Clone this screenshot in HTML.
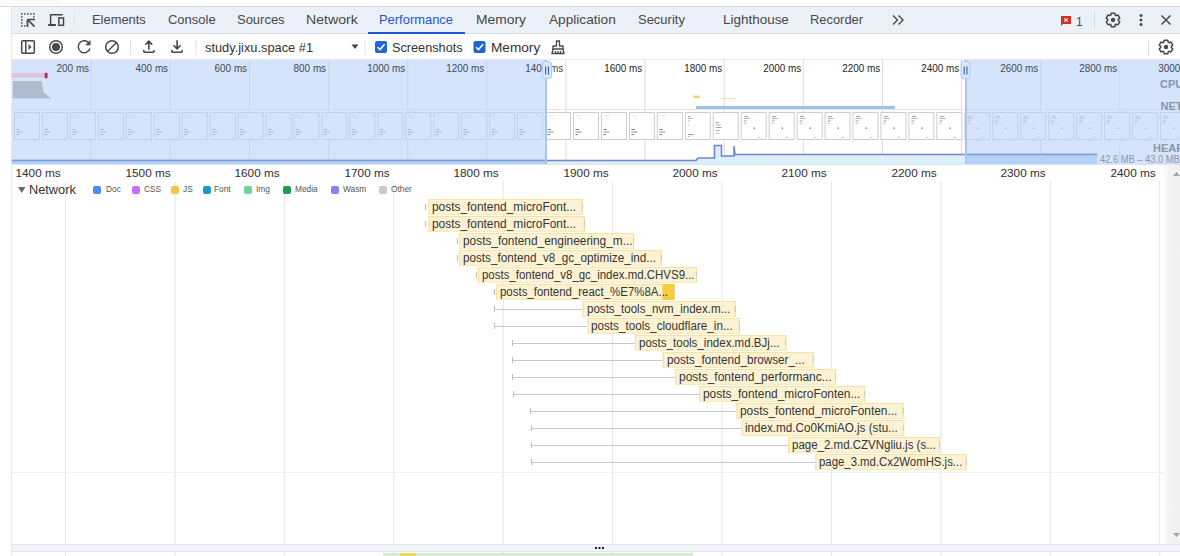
<!DOCTYPE html><html><head><meta charset="utf-8"><style>
*{box-sizing:border-box;margin:0;padding:0}
html,body{width:1180px;height:556px;overflow:hidden;background:#fff;font-family:"Liberation Sans",sans-serif;color:#1f1f1f}
body{position:relative}
.a{position:absolute}
.t{position:absolute;white-space:nowrap;line-height:1}
svg{position:absolute;left:0;top:0;overflow:visible}
.tab{position:absolute;top:14px;font-size:12.4px;color:#474747;white-space:nowrap;line-height:1}
.ol{position:absolute;top:63px;font-size:11px;color:#3c3c3c;white-space:nowrap;line-height:1;transform-origin:100% 50%}
.rl{position:absolute;top:168px;font-size:11.4px;color:#303030;white-space:nowrap;line-height:1;transform-origin:100% 50%;transform:scaleX(1.035)}
.nl{position:absolute;font-size:12px;color:#333;white-space:nowrap;line-height:1;transform-origin:0 50%}
.lg{position:absolute;top:185px;font-size:8.6px;color:#555;white-space:nowrap;line-height:1;transform:scaleX(0.97);transform-origin:0 50%}
.sw{position:absolute;top:186px;width:8px;height:8px;border-radius:2px}
</style></head><body>
<svg width="1180" height="556" viewBox="0 0 1180 556">
<rect x="0" y="6" width="1180" height="1" fill="#d6d6d8"/>
<rect x="0" y="0" width="62" height="5" fill="#fafafa"/>
<rect x="11" y="6" width="1" height="550" fill="#e8e9ef"/>
<rect x="12" y="7" width="1168" height="26" fill="#ecf1f9"/>
<rect x="12" y="33" width="1168" height="1" fill="#d5dce8"/>
<rect x="12" y="59" width="1168" height="1" fill="#e3e7ee"/>
<rect x="12" y="60" width="1168" height="104" fill="#fff"/>
<rect x="90.63" y="60" width="1" height="104" fill="#d9dbe8"/>
<rect x="169.76" y="60" width="1" height="104" fill="#d9dbe8"/>
<rect x="248.89" y="60" width="1" height="104" fill="#d9dbe8"/>
<rect x="328.02" y="60" width="1" height="104" fill="#d9dbe8"/>
<rect x="407.15" y="60" width="1" height="104" fill="#d9dbe8"/>
<rect x="486.28" y="60" width="1" height="104" fill="#d9dbe8"/>
<rect x="565.41" y="60" width="1" height="104" fill="#d9dbe8"/>
<rect x="644.54" y="60" width="1" height="104" fill="#d9dbe8"/>
<rect x="723.67" y="60" width="1" height="104" fill="#d9dbe8"/>
<rect x="802.80" y="60" width="1" height="104" fill="#d9dbe8"/>
<rect x="881.93" y="60" width="1" height="104" fill="#d9dbe8"/>
<rect x="961.06" y="60" width="1" height="104" fill="#d9dbe8"/>
<rect x="1040.19" y="60" width="1" height="104" fill="#d9dbe8"/>
<rect x="1119.32" y="60" width="1" height="104" fill="#d9dbe8"/>
<rect x="1198.45" y="60" width="1" height="104" fill="#d9dbe8"/>
<rect x="12" y="109" width="1168" height="1" fill="#e2e5ea"/>
<rect x="693.5" y="95.6" width="6" height="2.4" fill="#f1d060"/>
<rect x="720" y="98" width="16" height="1" fill="#f6e3a8"/>
<rect x="696" y="106" width="199" height="3" fill="#9fc1e9"/>
<rect x="14.50" y="112.5" width="25" height="27" fill="#fff" stroke="#cacdd3" stroke-width="1"/>
<rect x="17.00" y="115.5" width="5" height="0.7" fill="#ddd"/>
<rect x="19.00" y="118" width="4" height="0.7" fill="#e4e4e4"/>
<rect x="16.50" y="129" width="3.5" height="1.1" fill="#888"/>
<rect x="16.50" y="131.5" width="6" height="1.1" fill="#999"/>
<rect x="16.50" y="134" width="2.5" height="1.1" fill="#888"/>
<rect x="42.45" y="112.5" width="25" height="27" fill="#fff" stroke="#cacdd3" stroke-width="1"/>
<rect x="44.95" y="115.5" width="5" height="0.7" fill="#ddd"/>
<rect x="46.95" y="118" width="4" height="0.7" fill="#e4e4e4"/>
<rect x="44.45" y="129" width="3.5" height="1.1" fill="#888"/>
<rect x="44.45" y="131.5" width="6" height="1.1" fill="#999"/>
<rect x="44.45" y="134" width="2.5" height="1.1" fill="#888"/>
<rect x="70.40" y="112.5" width="25" height="27" fill="#fff" stroke="#cacdd3" stroke-width="1"/>
<rect x="72.90" y="115.5" width="5" height="0.7" fill="#ddd"/>
<rect x="74.90" y="118" width="4" height="0.7" fill="#e4e4e4"/>
<rect x="72.40" y="129" width="3.5" height="1.1" fill="#888"/>
<rect x="72.40" y="131.5" width="6" height="1.1" fill="#999"/>
<rect x="72.40" y="134" width="2.5" height="1.1" fill="#888"/>
<rect x="98.35" y="112.5" width="25" height="27" fill="#fff" stroke="#cacdd3" stroke-width="1"/>
<rect x="100.85" y="115.5" width="5" height="0.7" fill="#ddd"/>
<rect x="102.85" y="118" width="4" height="0.7" fill="#e4e4e4"/>
<rect x="100.35" y="129" width="3.5" height="1.1" fill="#888"/>
<rect x="100.35" y="131.5" width="6" height="1.1" fill="#999"/>
<rect x="100.35" y="134" width="2.5" height="1.1" fill="#888"/>
<rect x="126.30" y="112.5" width="25" height="27" fill="#fff" stroke="#cacdd3" stroke-width="1"/>
<rect x="128.80" y="115.5" width="5" height="0.7" fill="#ddd"/>
<rect x="130.80" y="118" width="4" height="0.7" fill="#e4e4e4"/>
<rect x="128.30" y="129" width="3.5" height="1.1" fill="#888"/>
<rect x="128.30" y="131.5" width="6" height="1.1" fill="#999"/>
<rect x="128.30" y="134" width="2.5" height="1.1" fill="#888"/>
<rect x="154.25" y="112.5" width="25" height="27" fill="#fff" stroke="#cacdd3" stroke-width="1"/>
<rect x="156.75" y="115.5" width="5" height="0.7" fill="#ddd"/>
<rect x="158.75" y="118" width="4" height="0.7" fill="#e4e4e4"/>
<rect x="156.25" y="129" width="3.5" height="1.1" fill="#888"/>
<rect x="156.25" y="131.5" width="6" height="1.1" fill="#999"/>
<rect x="156.25" y="134" width="2.5" height="1.1" fill="#888"/>
<rect x="182.20" y="112.5" width="25" height="27" fill="#fff" stroke="#cacdd3" stroke-width="1"/>
<rect x="184.70" y="115.5" width="5" height="0.7" fill="#ddd"/>
<rect x="186.70" y="118" width="4" height="0.7" fill="#e4e4e4"/>
<rect x="184.20" y="129" width="3.5" height="1.1" fill="#888"/>
<rect x="184.20" y="131.5" width="6" height="1.1" fill="#999"/>
<rect x="184.20" y="134" width="2.5" height="1.1" fill="#888"/>
<rect x="210.15" y="112.5" width="25" height="27" fill="#fff" stroke="#cacdd3" stroke-width="1"/>
<rect x="212.65" y="115.5" width="5" height="0.7" fill="#ddd"/>
<rect x="214.65" y="118" width="4" height="0.7" fill="#e4e4e4"/>
<rect x="212.15" y="129" width="3.5" height="1.1" fill="#888"/>
<rect x="212.15" y="131.5" width="6" height="1.1" fill="#999"/>
<rect x="212.15" y="134" width="2.5" height="1.1" fill="#888"/>
<rect x="238.10" y="112.5" width="25" height="27" fill="#fff" stroke="#cacdd3" stroke-width="1"/>
<rect x="240.60" y="115.5" width="5" height="0.7" fill="#ddd"/>
<rect x="242.60" y="118" width="4" height="0.7" fill="#e4e4e4"/>
<rect x="240.10" y="129" width="3.5" height="1.1" fill="#888"/>
<rect x="240.10" y="131.5" width="6" height="1.1" fill="#999"/>
<rect x="240.10" y="134" width="2.5" height="1.1" fill="#888"/>
<rect x="266.05" y="112.5" width="25" height="27" fill="#fff" stroke="#cacdd3" stroke-width="1"/>
<rect x="268.55" y="115.5" width="5" height="0.7" fill="#ddd"/>
<rect x="270.55" y="118" width="4" height="0.7" fill="#e4e4e4"/>
<rect x="268.05" y="129" width="3.5" height="1.1" fill="#888"/>
<rect x="268.05" y="131.5" width="6" height="1.1" fill="#999"/>
<rect x="268.05" y="134" width="2.5" height="1.1" fill="#888"/>
<rect x="294.00" y="112.5" width="25" height="27" fill="#fff" stroke="#cacdd3" stroke-width="1"/>
<rect x="296.50" y="115.5" width="5" height="0.7" fill="#ddd"/>
<rect x="298.50" y="118" width="4" height="0.7" fill="#e4e4e4"/>
<rect x="296.00" y="129" width="3.5" height="1.1" fill="#888"/>
<rect x="296.00" y="131.5" width="6" height="1.1" fill="#999"/>
<rect x="296.00" y="134" width="2.5" height="1.1" fill="#888"/>
<rect x="321.95" y="112.5" width="25" height="27" fill="#fff" stroke="#cacdd3" stroke-width="1"/>
<rect x="324.45" y="115.5" width="5" height="0.7" fill="#ddd"/>
<rect x="326.45" y="118" width="4" height="0.7" fill="#e4e4e4"/>
<rect x="323.95" y="129" width="3.5" height="1.1" fill="#888"/>
<rect x="323.95" y="131.5" width="6" height="1.1" fill="#999"/>
<rect x="323.95" y="134" width="2.5" height="1.1" fill="#888"/>
<rect x="349.90" y="112.5" width="25" height="27" fill="#fff" stroke="#cacdd3" stroke-width="1"/>
<rect x="352.40" y="115.5" width="5" height="0.7" fill="#ddd"/>
<rect x="354.40" y="118" width="4" height="0.7" fill="#e4e4e4"/>
<rect x="351.90" y="129" width="3.5" height="1.1" fill="#888"/>
<rect x="351.90" y="131.5" width="6" height="1.1" fill="#999"/>
<rect x="351.90" y="134" width="2.5" height="1.1" fill="#888"/>
<rect x="377.85" y="112.5" width="25" height="27" fill="#fff" stroke="#cacdd3" stroke-width="1"/>
<rect x="380.35" y="115.5" width="5" height="0.7" fill="#ddd"/>
<rect x="382.35" y="118" width="4" height="0.7" fill="#e4e4e4"/>
<rect x="379.85" y="129" width="3.5" height="1.1" fill="#888"/>
<rect x="379.85" y="131.5" width="6" height="1.1" fill="#999"/>
<rect x="379.85" y="134" width="2.5" height="1.1" fill="#888"/>
<rect x="405.80" y="112.5" width="25" height="27" fill="#fff" stroke="#cacdd3" stroke-width="1"/>
<rect x="408.30" y="115.5" width="5" height="0.7" fill="#ddd"/>
<rect x="410.30" y="118" width="4" height="0.7" fill="#e4e4e4"/>
<rect x="407.80" y="129" width="3.5" height="1.1" fill="#888"/>
<rect x="407.80" y="131.5" width="6" height="1.1" fill="#999"/>
<rect x="407.80" y="134" width="2.5" height="1.1" fill="#888"/>
<rect x="433.75" y="112.5" width="25" height="27" fill="#fff" stroke="#cacdd3" stroke-width="1"/>
<rect x="436.25" y="115.5" width="5" height="0.7" fill="#ddd"/>
<rect x="438.25" y="118" width="4" height="0.7" fill="#e4e4e4"/>
<rect x="435.75" y="129" width="3.5" height="1.1" fill="#888"/>
<rect x="435.75" y="131.5" width="6" height="1.1" fill="#999"/>
<rect x="435.75" y="134" width="2.5" height="1.1" fill="#888"/>
<rect x="461.70" y="112.5" width="25" height="27" fill="#fff" stroke="#cacdd3" stroke-width="1"/>
<rect x="464.20" y="115.5" width="5" height="0.7" fill="#ddd"/>
<rect x="466.20" y="118" width="4" height="0.7" fill="#e4e4e4"/>
<rect x="463.70" y="129" width="3.5" height="1.1" fill="#888"/>
<rect x="463.70" y="131.5" width="6" height="1.1" fill="#999"/>
<rect x="463.70" y="134" width="2.5" height="1.1" fill="#888"/>
<rect x="489.65" y="112.5" width="25" height="27" fill="#fff" stroke="#cacdd3" stroke-width="1"/>
<rect x="492.15" y="115.5" width="5" height="0.7" fill="#ddd"/>
<rect x="494.15" y="118" width="4" height="0.7" fill="#e4e4e4"/>
<rect x="491.65" y="129" width="3.5" height="1.1" fill="#888"/>
<rect x="491.65" y="131.5" width="6" height="1.1" fill="#999"/>
<rect x="491.65" y="134" width="2.5" height="1.1" fill="#888"/>
<rect x="517.60" y="112.5" width="25" height="27" fill="#fff" stroke="#cacdd3" stroke-width="1"/>
<rect x="520.10" y="115.5" width="5" height="0.7" fill="#ddd"/>
<rect x="522.10" y="118" width="4" height="0.7" fill="#e4e4e4"/>
<rect x="519.60" y="129" width="3.5" height="1.1" fill="#888"/>
<rect x="519.60" y="131.5" width="6" height="1.1" fill="#999"/>
<rect x="519.60" y="134" width="2.5" height="1.1" fill="#888"/>
<rect x="545.55" y="112.5" width="25" height="27" fill="#fff" stroke="#cacdd3" stroke-width="1"/>
<rect x="548.05" y="115.5" width="5" height="0.7" fill="#ddd"/>
<rect x="550.05" y="118" width="4" height="0.7" fill="#e4e4e4"/>
<rect x="547.55" y="129" width="3.5" height="1.1" fill="#888"/>
<rect x="547.55" y="131.5" width="6" height="1.1" fill="#999"/>
<rect x="547.55" y="134" width="2.5" height="1.1" fill="#888"/>
<rect x="573.50" y="112.5" width="25" height="27" fill="#fff" stroke="#cacdd3" stroke-width="1"/>
<rect x="576.00" y="115.5" width="5" height="0.7" fill="#ddd"/>
<rect x="578.00" y="118" width="4" height="0.7" fill="#e4e4e4"/>
<rect x="575.50" y="129" width="3.5" height="1.1" fill="#888"/>
<rect x="575.50" y="131.5" width="6" height="1.1" fill="#999"/>
<rect x="575.50" y="134" width="2.5" height="1.1" fill="#888"/>
<rect x="601.45" y="112.5" width="25" height="27" fill="#fff" stroke="#cacdd3" stroke-width="1"/>
<rect x="603.95" y="115.5" width="5" height="0.7" fill="#ddd"/>
<rect x="605.95" y="118" width="4" height="0.7" fill="#e4e4e4"/>
<rect x="603.45" y="129" width="3.5" height="1.1" fill="#888"/>
<rect x="603.45" y="131.5" width="6" height="1.1" fill="#999"/>
<rect x="603.45" y="134" width="2.5" height="1.1" fill="#888"/>
<rect x="629.40" y="112.5" width="25" height="27" fill="#fff" stroke="#cacdd3" stroke-width="1"/>
<rect x="631.90" y="115.5" width="5" height="0.7" fill="#ddd"/>
<rect x="633.90" y="118" width="4" height="0.7" fill="#e4e4e4"/>
<rect x="631.40" y="129" width="3.5" height="1.1" fill="#888"/>
<rect x="631.40" y="131.5" width="6" height="1.1" fill="#999"/>
<rect x="631.40" y="134" width="2.5" height="1.1" fill="#888"/>
<rect x="657.35" y="112.5" width="25" height="27" fill="#fff" stroke="#cacdd3" stroke-width="1"/>
<rect x="659.85" y="115.5" width="5" height="0.7" fill="#ddd"/>
<rect x="661.85" y="118" width="4" height="0.7" fill="#e4e4e4"/>
<rect x="659.35" y="129" width="3.5" height="1.1" fill="#888"/>
<rect x="659.35" y="131.5" width="6" height="1.1" fill="#999"/>
<rect x="659.35" y="134" width="2.5" height="1.1" fill="#888"/>
<rect x="685.30" y="112.5" width="25" height="27" fill="#fff" stroke="#cacdd3" stroke-width="1"/>
<rect x="687.80" y="116" width="3" height="0.9" fill="#999"/>
<rect x="687.80" y="118" width="5" height="0.9" fill="#aaa"/>
<rect x="687.80" y="120.5" width="2" height="0.9" fill="#aaa"/>
<rect x="687.80" y="125" width="1.5" height="0.9" fill="#bbb"/>
<rect x="687.80" y="134" width="6" height="1" fill="#999"/>
<rect x="687.80" y="136" width="2" height="0.9" fill="#aaa"/>
<rect x="713.25" y="112.5" width="25" height="27" fill="#fff" stroke="#cacdd3" stroke-width="1"/>
<rect x="715.75" y="122" width="3" height="0.9" fill="#999"/>
<rect x="715.75" y="124.5" width="5" height="0.9" fill="#aaa"/>
<rect x="715.75" y="127" width="6" height="0.9" fill="#999"/>
<rect x="715.75" y="130" width="4" height="0.9" fill="#aaa"/>
<rect x="715.75" y="133" width="3" height="0.9" fill="#bbb"/>
<rect x="741.20" y="112.5" width="25" height="27" fill="#fff" stroke="#cacdd3" stroke-width="1"/>
<rect x="744.20" y="116" width="4" height="0.9" fill="#999"/>
<rect x="743.70" y="118" width="6" height="0.9" fill="#aaa"/>
<rect x="743.70" y="120.5" width="3" height="1" fill="#999"/>
<rect x="743.70" y="123" width="2" height="0.9" fill="#aaa"/>
<rect x="753.70" y="127.5" width="1.3" height="1.3" fill="#666"/>
<rect x="757.70" y="137" width="3" height="0.7" fill="#bbb"/>
<rect x="769.15" y="112.5" width="25" height="27" fill="#fff" stroke="#cacdd3" stroke-width="1"/>
<rect x="772.15" y="116" width="4" height="0.9" fill="#999"/>
<rect x="771.65" y="118" width="6" height="0.9" fill="#aaa"/>
<rect x="771.65" y="120.5" width="3" height="1" fill="#999"/>
<rect x="771.65" y="123" width="2" height="0.9" fill="#aaa"/>
<rect x="781.65" y="127.5" width="1.3" height="1.3" fill="#666"/>
<rect x="785.65" y="137" width="3" height="0.7" fill="#bbb"/>
<rect x="797.10" y="112.5" width="25" height="27" fill="#fff" stroke="#cacdd3" stroke-width="1"/>
<rect x="800.10" y="116" width="4" height="0.9" fill="#999"/>
<rect x="799.60" y="118" width="6" height="0.9" fill="#aaa"/>
<rect x="799.60" y="120.5" width="3" height="1" fill="#999"/>
<rect x="799.60" y="123" width="2" height="0.9" fill="#aaa"/>
<rect x="809.60" y="127.5" width="1.3" height="1.3" fill="#666"/>
<rect x="813.60" y="137" width="3" height="0.7" fill="#bbb"/>
<rect x="825.05" y="112.5" width="25" height="27" fill="#fff" stroke="#cacdd3" stroke-width="1"/>
<rect x="828.05" y="116" width="4" height="0.9" fill="#999"/>
<rect x="827.55" y="118" width="6" height="0.9" fill="#aaa"/>
<rect x="827.55" y="120.5" width="3" height="1" fill="#999"/>
<rect x="827.55" y="123" width="2" height="0.9" fill="#aaa"/>
<rect x="837.55" y="127.5" width="1.3" height="1.3" fill="#666"/>
<rect x="841.55" y="137" width="3" height="0.7" fill="#bbb"/>
<rect x="853.00" y="112.5" width="25" height="27" fill="#fff" stroke="#cacdd3" stroke-width="1"/>
<rect x="856.00" y="116" width="4" height="0.9" fill="#999"/>
<rect x="855.50" y="118" width="6" height="0.9" fill="#aaa"/>
<rect x="855.50" y="120.5" width="3" height="1" fill="#999"/>
<rect x="855.50" y="123" width="2" height="0.9" fill="#aaa"/>
<rect x="865.50" y="127.5" width="1.3" height="1.3" fill="#666"/>
<rect x="869.50" y="137" width="3" height="0.7" fill="#bbb"/>
<rect x="880.95" y="112.5" width="25" height="27" fill="#fff" stroke="#cacdd3" stroke-width="1"/>
<rect x="883.95" y="116" width="4" height="0.9" fill="#999"/>
<rect x="883.45" y="118" width="6" height="0.9" fill="#aaa"/>
<rect x="883.45" y="120.5" width="3" height="1" fill="#999"/>
<rect x="883.45" y="123" width="2" height="0.9" fill="#aaa"/>
<rect x="893.45" y="127.5" width="1.3" height="1.3" fill="#666"/>
<rect x="897.45" y="137" width="3" height="0.7" fill="#bbb"/>
<rect x="908.90" y="112.5" width="25" height="27" fill="#fff" stroke="#cacdd3" stroke-width="1"/>
<rect x="911.90" y="116" width="4" height="0.9" fill="#999"/>
<rect x="911.40" y="118" width="6" height="0.9" fill="#aaa"/>
<rect x="911.40" y="120.5" width="3" height="1" fill="#999"/>
<rect x="911.40" y="123" width="2" height="0.9" fill="#aaa"/>
<rect x="921.40" y="127.5" width="1.3" height="1.3" fill="#666"/>
<rect x="925.40" y="137" width="3" height="0.7" fill="#bbb"/>
<rect x="936.85" y="112.5" width="25" height="27" fill="#fff" stroke="#cacdd3" stroke-width="1"/>
<rect x="939.85" y="116" width="4" height="0.9" fill="#999"/>
<rect x="939.35" y="118" width="6" height="0.9" fill="#aaa"/>
<rect x="939.35" y="120.5" width="3" height="1" fill="#999"/>
<rect x="939.35" y="123" width="2" height="0.9" fill="#aaa"/>
<rect x="949.35" y="127.5" width="1.3" height="1.3" fill="#666"/>
<rect x="953.35" y="137" width="3" height="0.7" fill="#bbb"/>
<rect x="964.80" y="112.5" width="25" height="27" fill="#fff" stroke="#cacdd3" stroke-width="1"/>
<rect x="967.80" y="116" width="4" height="0.9" fill="#999"/>
<rect x="967.30" y="118" width="6" height="0.9" fill="#aaa"/>
<rect x="967.30" y="120.5" width="3" height="1" fill="#999"/>
<rect x="967.30" y="123" width="2" height="0.9" fill="#aaa"/>
<rect x="977.30" y="127.5" width="1.3" height="1.3" fill="#666"/>
<rect x="981.30" y="137" width="3" height="0.7" fill="#bbb"/>
<rect x="992.75" y="112.5" width="25" height="27" fill="#fff" stroke="#cacdd3" stroke-width="1"/>
<rect x="995.75" y="116" width="4" height="0.9" fill="#999"/>
<rect x="995.25" y="118" width="6" height="0.9" fill="#aaa"/>
<rect x="995.25" y="120.5" width="3" height="1" fill="#999"/>
<rect x="995.25" y="123" width="2" height="0.9" fill="#aaa"/>
<rect x="1005.25" y="127.5" width="1.3" height="1.3" fill="#666"/>
<rect x="1009.25" y="137" width="3" height="0.7" fill="#bbb"/>
<rect x="1020.70" y="112.5" width="25" height="27" fill="#fff" stroke="#cacdd3" stroke-width="1"/>
<rect x="1023.70" y="116" width="4" height="0.9" fill="#999"/>
<rect x="1023.20" y="118" width="6" height="0.9" fill="#aaa"/>
<rect x="1023.20" y="120.5" width="3" height="1" fill="#999"/>
<rect x="1023.20" y="123" width="2" height="0.9" fill="#aaa"/>
<rect x="1033.20" y="127.5" width="1.3" height="1.3" fill="#666"/>
<rect x="1037.20" y="137" width="3" height="0.7" fill="#bbb"/>
<rect x="1048.65" y="112.5" width="25" height="27" fill="#fff" stroke="#cacdd3" stroke-width="1"/>
<rect x="1051.65" y="116" width="4" height="0.9" fill="#999"/>
<rect x="1051.15" y="118" width="6" height="0.9" fill="#aaa"/>
<rect x="1051.15" y="120.5" width="3" height="1" fill="#999"/>
<rect x="1051.15" y="123" width="2" height="0.9" fill="#aaa"/>
<rect x="1061.15" y="127.5" width="1.3" height="1.3" fill="#666"/>
<rect x="1065.15" y="137" width="3" height="0.7" fill="#bbb"/>
<rect x="1076.60" y="112.5" width="25" height="27" fill="#fff" stroke="#cacdd3" stroke-width="1"/>
<rect x="1079.60" y="116" width="4" height="0.9" fill="#999"/>
<rect x="1079.10" y="118" width="6" height="0.9" fill="#aaa"/>
<rect x="1079.10" y="120.5" width="3" height="1" fill="#999"/>
<rect x="1079.10" y="123" width="2" height="0.9" fill="#aaa"/>
<rect x="1089.10" y="127.5" width="1.3" height="1.3" fill="#666"/>
<rect x="1093.10" y="137" width="3" height="0.7" fill="#bbb"/>
<rect x="1104.55" y="112.5" width="25" height="27" fill="#fff" stroke="#cacdd3" stroke-width="1"/>
<rect x="1107.55" y="116" width="4" height="0.9" fill="#999"/>
<rect x="1107.05" y="118" width="6" height="0.9" fill="#aaa"/>
<rect x="1107.05" y="120.5" width="3" height="1" fill="#999"/>
<rect x="1107.05" y="123" width="2" height="0.9" fill="#aaa"/>
<rect x="1117.05" y="127.5" width="1.3" height="1.3" fill="#666"/>
<rect x="1121.05" y="137" width="3" height="0.7" fill="#bbb"/>
<rect x="1132.50" y="112.5" width="25" height="27" fill="#fff" stroke="#cacdd3" stroke-width="1"/>
<rect x="1135.50" y="116" width="4" height="0.9" fill="#999"/>
<rect x="1135.00" y="118" width="6" height="0.9" fill="#aaa"/>
<rect x="1135.00" y="120.5" width="3" height="1" fill="#999"/>
<rect x="1135.00" y="123" width="2" height="0.9" fill="#aaa"/>
<rect x="1145.00" y="127.5" width="1.3" height="1.3" fill="#666"/>
<rect x="1149.00" y="137" width="3" height="0.7" fill="#bbb"/>
<rect x="1160.45" y="112.5" width="25" height="27" fill="#fff" stroke="#cacdd3" stroke-width="1"/>
<rect x="1163.45" y="116" width="4" height="0.9" fill="#999"/>
<rect x="1162.95" y="118" width="6" height="0.9" fill="#aaa"/>
<rect x="1162.95" y="120.5" width="3" height="1" fill="#999"/>
<rect x="1162.95" y="123" width="2" height="0.9" fill="#aaa"/>
<rect x="1172.95" y="127.5" width="1.3" height="1.3" fill="#666"/>
<rect x="1176.95" y="137" width="3" height="0.7" fill="#bbb"/>
<path d="M12 160.5 H696 L698 158 H714.5 V145.5 H721.5 V156 H734 V146 L735 154.5 H1097 V164 H12 Z" fill="#dcf0fc"/>
<path d="M12 160.5 H696 L698 158 H714.5 V145.5 H721.5 V156 H734 V146 L735 154.5 H1097" fill="none" stroke="#6f86c9" stroke-width="1.6"/>
<rect x="12" y="164" width="1168" height="1" fill="#e0e4ec"/>
<rect x="12" y="60" width="534" height="104" fill="#bcd3f8" fill-opacity="0.62"/>
<rect x="966" y="60" width="214" height="104" fill="#bcd3f8" fill-opacity="0.62"/>
<rect x="12" y="73" width="33" height="4.5" fill="#dfc3d8"/>
<rect x="44.8" y="72.8" width="2.7" height="5.4" fill="#b3264b"/>
<path d="M13 81 H41.9 L43.5 92.3 L51 98.6 H13 Z" fill="#afbcd0"/>
<clipPath id="ovc"><rect x="12" y="60" width="534" height="104"/><rect x="966" y="60" width="214" height="104"/></clipPath>
<g clip-path="url(#ovc)"><path d="M12 160.5 H696 L698 158 H714.5 V145.5 H721.5 V156 H734 V146 L735 154.5 H1097 V164 H12 Z" fill="#b4d2f9"/><path d="M12 160.5 H696 L698 158 H714.5 V145.5 H721.5 V156 H734 V146 L735 154.5 H1097" fill="none" stroke="#7c9cd8" stroke-width="1.6"/></g>
<rect x="545" y="60" width="2" height="104" fill="#a9c3f2"/>
<rect x="965" y="60" width="2" height="104" fill="#a9c3f2"/>
<rect x="65.10" y="181" width="1" height="375" fill="#e6e6e6"/>
<rect x="174.51" y="181" width="1" height="375" fill="#e6e6e6"/>
<rect x="283.92" y="181" width="1" height="375" fill="#e6e6e6"/>
<rect x="393.33" y="181" width="1" height="375" fill="#e6e6e6"/>
<rect x="502.74" y="181" width="1" height="375" fill="#e6e6e6"/>
<rect x="612.15" y="181" width="1" height="375" fill="#e6e6e6"/>
<rect x="721.56" y="181" width="1" height="375" fill="#e6e6e6"/>
<rect x="830.97" y="181" width="1" height="375" fill="#e6e6e6"/>
<rect x="940.38" y="181" width="1" height="375" fill="#e6e6e6"/>
<rect x="1049.79" y="181" width="1" height="375" fill="#e6e6e6"/>
<rect x="1159.20" y="181" width="1" height="375" fill="#e6e6e6"/>
<rect x="12" y="472" width="1156" height="1" fill="#f1f1f1"/>
<defs><linearGradient id="sbg" x1="0" x2="1" y1="0" y2="0"><stop offset="0" stop-color="#fbfbfb"/><stop offset="0.4" stop-color="#f3f3f3"/><stop offset="1" stop-color="#f1f1f1"/></linearGradient></defs>
<rect x="1164" y="165" width="16" height="379" fill="url(#sbg)"/>
<path d="M1173 176 L1176.5 172 L1180 176 Z" fill="#a3a3a3"/>
<path d="M1173 533 L1176.5 537 L1180 533 Z" fill="#a3a3a3"/>
<rect x="12" y="544" width="1168" height="1.2" fill="#e2e5ef"/>
<rect x="12" y="545" width="1168" height="6" fill="#f3f5fb"/>
<rect x="12" y="551" width="1168" height="1.2" fill="#e2e5ef"/>
<rect x="595" y="547" width="2" height="2" fill="#222"/>
<rect x="598.5" y="547" width="2" height="2" fill="#222"/>
<rect x="602" y="547" width="2" height="2" fill="#222"/>
<rect x="383" y="553" width="310" height="3" fill="#d8ecd3"/>
<rect x="400" y="553" width="16" height="3" fill="#f0dc5a"/>
<rect x="425" y="204" width="1" height="6" fill="#bdbdbd"/>
<rect x="428.4" y="199" width="154.3" height="16" fill="#fdf3d4"/>
<rect x="428.4" y="199" width="154.3" height="1" fill="#f6e3a4"/>
<rect x="428.4" y="214" width="154.3" height="1" fill="#f8ebbb"/>
<rect x="428.4" y="199" width="1" height="16" fill="#f4e09a"/>
<rect x="581.5" y="199" width="1.2" height="16" fill="#ebe6a6"/>
<rect x="582" y="204" width="1" height="6" fill="#d0d0c0"/>
<rect x="425" y="221" width="1" height="6" fill="#bdbdbd"/>
<rect x="428.4" y="216" width="156.4" height="16" fill="#fdf3d4"/>
<rect x="428.4" y="216" width="156.4" height="1" fill="#f6e3a4"/>
<rect x="428.4" y="231" width="156.4" height="1" fill="#f8ebbb"/>
<rect x="428.4" y="216" width="1" height="16" fill="#f4e09a"/>
<rect x="583.6" y="216" width="1.2" height="16" fill="#ebe6a6"/>
<rect x="584" y="221" width="1" height="6" fill="#d0d0c0"/>
<rect x="457" y="238" width="1" height="6" fill="#bdbdbd"/>
<rect x="459.4" y="233" width="174.9" height="16" fill="#fdf3d4"/>
<rect x="459.4" y="233" width="174.9" height="1" fill="#f6e3a4"/>
<rect x="459.4" y="248" width="174.9" height="1" fill="#f8ebbb"/>
<rect x="459.4" y="233" width="1" height="16" fill="#f4e09a"/>
<rect x="633.1" y="233" width="1.2" height="16" fill="#ebe6a6"/>
<rect x="633" y="238" width="1" height="6" fill="#d0d0c0"/>
<rect x="457" y="255" width="1" height="6" fill="#bdbdbd"/>
<rect x="459.4" y="250" width="202.1" height="16" fill="#fdf3d4"/>
<rect x="459.4" y="250" width="202.1" height="1" fill="#f6e3a4"/>
<rect x="459.4" y="265" width="202.1" height="1" fill="#f8ebbb"/>
<rect x="459.4" y="250" width="1" height="16" fill="#f4e09a"/>
<rect x="660.3" y="250" width="1.2" height="16" fill="#ebe6a6"/>
<rect x="661" y="255" width="1" height="6" fill="#d0d0c0"/>
<rect x="476" y="272" width="1" height="6" fill="#bdbdbd"/>
<rect x="478.1" y="267" width="218.9" height="16" fill="#fdf3d4"/>
<rect x="478.1" y="267" width="218.9" height="1" fill="#f6e3a4"/>
<rect x="478.1" y="282" width="218.9" height="1" fill="#f8ebbb"/>
<rect x="478.1" y="267" width="1" height="16" fill="#f4e09a"/>
<rect x="695.8" y="267" width="1.2" height="16" fill="#ebe6a6"/>
<rect x="696" y="272" width="1" height="6" fill="#d0d0c0"/>
<rect x="494" y="289" width="1" height="6" fill="#bdbdbd"/>
<rect x="496.2" y="284" width="178.5" height="16" fill="#fdf3d4"/>
<rect x="496.2" y="284" width="178.5" height="1" fill="#f6e3a4"/>
<rect x="496.2" y="299" width="178.5" height="1" fill="#f8ebbb"/>
<rect x="496.2" y="284" width="1" height="16" fill="#f4e09a"/>
<rect x="673.5" y="284" width="1.2" height="16" fill="#ebe6a6"/>
<rect x="662.5" y="284" width="12.2" height="16" fill="#f6cd3a"/>
<rect x="674" y="289" width="1" height="6" fill="#d0d0c0"/>
<rect x="494.7" y="309" width="87.9" height="1" fill="#c8c8c8"/>
<rect x="494" y="306" width="1" height="6" fill="#bdbdbd"/>
<rect x="582.6" y="301" width="153.1" height="16" fill="#fdf3d4"/>
<rect x="582.6" y="301" width="153.1" height="1" fill="#f6e3a4"/>
<rect x="582.6" y="316" width="153.1" height="1" fill="#f8ebbb"/>
<rect x="582.6" y="301" width="1" height="16" fill="#f4e09a"/>
<rect x="734.5" y="301" width="1.2" height="16" fill="#ebe6a6"/>
<rect x="735" y="306" width="1" height="6" fill="#d0d0c0"/>
<rect x="494.7" y="326" width="92.8" height="1" fill="#c8c8c8"/>
<rect x="494" y="323" width="1" height="6" fill="#bdbdbd"/>
<rect x="587.5" y="318" width="152.5" height="16" fill="#fdf3d4"/>
<rect x="587.5" y="318" width="152.5" height="1" fill="#f6e3a4"/>
<rect x="587.5" y="333" width="152.5" height="1" fill="#f8ebbb"/>
<rect x="587.5" y="318" width="1" height="16" fill="#f4e09a"/>
<rect x="738.8" y="318" width="1.2" height="16" fill="#ebe6a6"/>
<rect x="739" y="323" width="1" height="6" fill="#d0d0c0"/>
<rect x="512.0" y="343" width="123.3" height="1" fill="#c8c8c8"/>
<rect x="512" y="340" width="1" height="6" fill="#bdbdbd"/>
<rect x="635.3" y="335" width="151.2" height="16" fill="#fdf3d4"/>
<rect x="635.3" y="335" width="151.2" height="1" fill="#f6e3a4"/>
<rect x="635.3" y="350" width="151.2" height="1" fill="#f8ebbb"/>
<rect x="635.3" y="335" width="1" height="16" fill="#f4e09a"/>
<rect x="785.3" y="335" width="1.2" height="16" fill="#ebe6a6"/>
<rect x="785" y="340" width="1" height="6" fill="#d0d0c0"/>
<rect x="512.0" y="360" width="150.7" height="1" fill="#c8c8c8"/>
<rect x="512" y="357" width="1" height="6" fill="#bdbdbd"/>
<rect x="662.7" y="352" width="151.0" height="16" fill="#fdf3d4"/>
<rect x="662.7" y="352" width="151.0" height="1" fill="#f6e3a4"/>
<rect x="662.7" y="367" width="151.0" height="1" fill="#f8ebbb"/>
<rect x="662.7" y="352" width="1" height="16" fill="#f4e09a"/>
<rect x="812.5" y="352" width="1.2" height="16" fill="#ebe6a6"/>
<rect x="813" y="357" width="1" height="6" fill="#d0d0c0"/>
<rect x="512.0" y="377" width="163.4" height="1" fill="#c8c8c8"/>
<rect x="512" y="374" width="1" height="6" fill="#bdbdbd"/>
<rect x="675.4" y="369" width="160.7" height="16" fill="#fdf3d4"/>
<rect x="675.4" y="369" width="160.7" height="1" fill="#f6e3a4"/>
<rect x="675.4" y="384" width="160.7" height="1" fill="#f8ebbb"/>
<rect x="675.4" y="369" width="1" height="16" fill="#f4e09a"/>
<rect x="834.9" y="369" width="1.2" height="16" fill="#ebe6a6"/>
<rect x="835" y="374" width="1" height="6" fill="#d0d0c0"/>
<rect x="513.3" y="394" width="186.0" height="1" fill="#c8c8c8"/>
<rect x="513" y="391" width="1" height="6" fill="#bdbdbd"/>
<rect x="699.3" y="386" width="166.1" height="16" fill="#fdf3d4"/>
<rect x="699.3" y="386" width="166.1" height="1" fill="#f6e3a4"/>
<rect x="699.3" y="401" width="166.1" height="1" fill="#f8ebbb"/>
<rect x="699.3" y="386" width="1" height="16" fill="#f4e09a"/>
<rect x="864.2" y="386" width="1.2" height="16" fill="#ebe6a6"/>
<rect x="864" y="391" width="1" height="6" fill="#d0d0c0"/>
<rect x="530.4" y="411" width="206.1" height="1" fill="#c8c8c8"/>
<rect x="530" y="408" width="1" height="6" fill="#bdbdbd"/>
<rect x="736.5" y="403" width="167.1" height="16" fill="#fdf3d4"/>
<rect x="736.5" y="403" width="167.1" height="1" fill="#f6e3a4"/>
<rect x="736.5" y="418" width="167.1" height="1" fill="#f8ebbb"/>
<rect x="736.5" y="403" width="1" height="16" fill="#f4e09a"/>
<rect x="902.4" y="403" width="1.2" height="16" fill="#ebe6a6"/>
<rect x="903" y="408" width="1" height="6" fill="#d0d0c0"/>
<rect x="531.6" y="428" width="210.0" height="1" fill="#c8c8c8"/>
<rect x="531" y="425" width="1" height="6" fill="#bdbdbd"/>
<rect x="741.6" y="420" width="162.7" height="16" fill="#fdf3d4"/>
<rect x="741.6" y="420" width="162.7" height="1" fill="#f6e3a4"/>
<rect x="741.6" y="435" width="162.7" height="1" fill="#f8ebbb"/>
<rect x="741.6" y="420" width="1" height="16" fill="#f4e09a"/>
<rect x="903.1" y="420" width="1.2" height="16" fill="#ebe6a6"/>
<rect x="903" y="425" width="1" height="6" fill="#d0d0c0"/>
<rect x="531.6" y="445" width="256.5" height="1" fill="#c8c8c8"/>
<rect x="531" y="442" width="1" height="6" fill="#bdbdbd"/>
<rect x="788.1" y="437" width="151.8" height="16" fill="#fdf3d4"/>
<rect x="788.1" y="437" width="151.8" height="1" fill="#f6e3a4"/>
<rect x="788.1" y="452" width="151.8" height="1" fill="#f8ebbb"/>
<rect x="788.1" y="437" width="1" height="16" fill="#f4e09a"/>
<rect x="938.7" y="437" width="1.2" height="16" fill="#ebe6a6"/>
<rect x="939" y="442" width="1" height="6" fill="#d0d0c0"/>
<rect x="531.6" y="462" width="283.7" height="1" fill="#c8c8c8"/>
<rect x="531" y="459" width="1" height="6" fill="#bdbdbd"/>
<rect x="815.3" y="454" width="151.3" height="16" fill="#fdf3d4"/>
<rect x="815.3" y="454" width="151.3" height="1" fill="#f6e3a4"/>
<rect x="815.3" y="469" width="151.3" height="1" fill="#f8ebbb"/>
<rect x="815.3" y="454" width="1" height="16" fill="#f4e09a"/>
<rect x="965.4" y="454" width="1.2" height="16" fill="#ebe6a6"/>
<rect x="966" y="459" width="1" height="6" fill="#d0d0c0"/>
</svg>
<div class="tab" style="left:92.2px;transform:scaleX(1.041);transform-origin:0 50%">Elements</div>
<div class="tab" style="left:168.2px;transform:scaleX(1.047);transform-origin:0 50%">Console</div>
<div class="tab" style="left:237.2px;transform:scaleX(1.047);transform-origin:0 50%">Sources</div>
<div class="tab" style="left:306.2px;transform:scaleX(1.140);transform-origin:0 50%">Network</div>
<div class="tab" style="left:379.2px;transform:scaleX(1.043);transform-origin:0 50%;color:#1d57cf">Performance</div>
<div class="tab" style="left:476.2px;transform:scaleX(1.116);transform-origin:0 50%">Memory</div>
<div class="tab" style="left:549.2px;transform:scaleX(1.102);transform-origin:0 50%">Application</div>
<div class="tab" style="left:638.2px;transform:scaleX(1.047);transform-origin:0 50%">Security</div>
<div class="tab" style="left:723.2px;transform:scaleX(1.086);transform-origin:0 50%">Lighthouse</div>
<div class="tab" style="left:810.2px;transform:scaleX(1.041);transform-origin:0 50%">Recorder</div>
<div class="ol" style="right:1091.4px;color:#404a5a;transform:scaleX(0.9)">200 ms</div>
<div class="ol" style="right:1012.2px;color:#404a5a;transform:scaleX(0.9)">400 ms</div>
<div class="ol" style="right:933.1px;color:#404a5a;transform:scaleX(0.9)">600 ms</div>
<div class="ol" style="right:854.0px;color:#404a5a;transform:scaleX(0.9)">800 ms</div>
<div class="ol" style="right:774.9px;color:#404a5a;transform:scaleX(0.9)">1000 ms</div>
<div class="ol" style="right:695.7px;color:#404a5a;transform:scaleX(0.9)">1200 ms</div>
<div class="ol" style="right:616.6px;color:#404a5a;transform:scaleX(0.9)">1400 ms</div>
<div class="ol" style="right:537.5px;color:#262626;transform:scaleX(0.9)">1600 ms</div>
<div class="ol" style="right:458.3px;color:#262626;transform:scaleX(0.9)">1800 ms</div>
<div class="ol" style="right:379.2px;color:#262626;transform:scaleX(0.9)">2000 ms</div>
<div class="ol" style="right:300.1px;color:#262626;transform:scaleX(0.9)">2200 ms</div>
<div class="ol" style="right:220.9px;color:#262626;transform:scaleX(0.9)">2400 ms</div>
<div class="ol" style="right:141.8px;color:#404a5a;transform:scaleX(0.9)">2600 ms</div>
<div class="ol" style="right:62.7px;color:#404a5a;transform:scaleX(0.9)">2800 ms</div>
<div class="ol" style="right:-16.5px;color:#404a5a;transform:scaleX(0.9)">3000 ms</div>
<svg width="1180" height="556" viewBox="0 0 1180 556">
<rect x="542.5" y="61.5" width="9" height="17" rx="2.5" fill="#dbe6f9" stroke="#b3c8ee" stroke-width="1"/>
<rect x="545.1" y="66.5" width="1.1" height="8" fill="#2a5fd0"/>
<rect x="547.9" y="66.5" width="1.1" height="8" fill="#2a5fd0"/>
<rect x="961" y="61.5" width="9" height="17" rx="2.5" fill="#dbe6f9" stroke="#b3c8ee" stroke-width="1"/>
<rect x="963.6" y="66.5" width="1.1" height="8" fill="#2a5fd0"/>
<rect x="966.4" y="66.5" width="1.1" height="8" fill="#2a5fd0"/>
</svg>
<div class="rl" style="right:1118.9px">1400 ms</div>
<div class="rl" style="right:1009.5px">1500 ms</div>
<div class="rl" style="right:900.1px">1600 ms</div>
<div class="rl" style="right:790.7px">1700 ms</div>
<div class="rl" style="right:681.3px">1800 ms</div>
<div class="rl" style="right:571.8px">1900 ms</div>
<div class="rl" style="right:462.4px">2000 ms</div>
<div class="rl" style="right:353.0px">2100 ms</div>
<div class="rl" style="right:243.6px">2200 ms</div>
<div class="rl" style="right:134.2px">2300 ms</div>
<div class="rl" style="right:24.8px">2400 ms</div>
<div class="nl" style="left:432.4px;top:200.5px;transform:scaleX(0.991)">posts_fontend_microFont...</div>
<div class="nl" style="left:432.4px;top:217.5px;transform:scaleX(0.991)">posts_fontend_microFont...</div>
<div class="nl" style="left:462.9px;top:234.5px;transform:scaleX(0.989)">posts_fontend_engineering_m...</div>
<div class="nl" style="left:462.9px;top:251.5px;transform:scaleX(0.974)">posts_fontend_v8_gc_optimize_ind...</div>
<div class="nl" style="left:481.9px;top:268.5px;transform:scaleX(0.954)">posts_fontend_v8_gc_index.md.CHVS9...</div>
<div class="nl" style="left:499.7px;top:285.5px;transform:scaleX(0.954)">posts_fontend_react_%E7%8A...</div>
<div class="nl" style="left:586.7px;top:302.5px;transform:scaleX(0.963)">posts_tools_nvm_index.m...</div>
<div class="nl" style="left:591.2px;top:319.5px;transform:scaleX(0.974)">posts_tools_cloudflare_in...</div>
<div class="nl" style="left:639.0px;top:336.5px;transform:scaleX(0.962)">posts_tools_index.md.BJj...</div>
<div class="nl" style="left:666.7px;top:353.5px;transform:scaleX(0.974)">posts_fontend_browser_...</div>
<div class="nl" style="left:679.0px;top:370.5px;transform:scaleX(1.000)">posts_fontend_performanc...</div>
<div class="nl" style="left:703.1px;top:387.5px;transform:scaleX(0.991)">posts_fontend_microFonten...</div>
<div class="nl" style="left:740.0px;top:404.5px;transform:scaleX(0.991)">posts_fontend_microFonten...</div>
<div class="nl" style="left:745.1px;top:421.5px;transform:scaleX(0.971)">index.md.Co0KmiAO.js (stu...</div>
<div class="nl" style="left:791.7px;top:438.5px;transform:scaleX(0.958)">page_2.md.CZVNgliu.js (s...</div>
<div class="nl" style="left:818.9px;top:455.5px;transform:scaleX(0.948)">page_3.md.Cx2WomHS.js...</div>
<svg width="1180" height="556" viewBox="0 0 1180 556">
<rect x="21.05" y="13.15" width="1.5" height="1.5" fill="#474747"/>
<rect x="24.05" y="13.15" width="1.5" height="1.5" fill="#474747"/>
<rect x="27.05" y="13.15" width="1.5" height="1.5" fill="#474747"/>
<rect x="30.05" y="13.15" width="1.5" height="1.5" fill="#474747"/>
<rect x="33.05" y="13.15" width="1.5" height="1.5" fill="#474747"/>
<rect x="21.05" y="16.15" width="1.5" height="1.5" fill="#474747"/>
<rect x="21.05" y="19.15" width="1.5" height="1.5" fill="#474747"/>
<rect x="21.05" y="22.15" width="1.5" height="1.5" fill="#474747"/>
<rect x="21.05" y="25.15" width="1.5" height="1.5" fill="#474747"/>
<rect x="24.05" y="25.15" width="1.5" height="1.5" fill="#474747"/>
<rect x="33.05" y="16.15" width="1.5" height="1.5" fill="#474747"/>
<path d="M27.5 19.5 L34.6 26.6 M27.5 19.5 H35 M27.5 19.5 V27" stroke="#474747" stroke-width="1.7" fill="none"/>
<path d="M50.6 25 V14.8 H62.7" stroke="#474747" stroke-width="1.5" fill="none"/>
<rect x="48.2" y="24" width="7.7" height="2" fill="#474747"/>
<rect x="58.9" y="17.9" width="4.6" height="7.4" stroke="#474747" stroke-width="1.5" fill="none"/>
<rect x="74" y="11" width="1" height="17" fill="#dde1e8"/>
<rect x="368" y="32" width="97" height="2" rx="0.5" fill="#1d57cf"/>
<path d="M893 15.5 L897.5 20 L893 24.5 M898.5 15.5 L903 20 L898.5 24.5" stroke="#474747" stroke-width="1.4" fill="none"/>
<path d="M1061 16 H1071 V24 H1063 L1061 26 Z" fill="#d93025"/>
<path d="M1064.3 18.3 L1067.7 21.7 M1067.7 18.3 L1064.3 21.7" stroke="#fff" stroke-width="1.1"/>
<rect x="1094" y="12" width="1" height="16" fill="#d5dae3"/>
<polygon points="1111.20,13.14 1114.80,13.14 1115.17,15.04 1116.12,15.59 1117.96,14.96 1119.76,18.08 1118.29,19.35 1118.29,20.45 1119.76,21.72 1117.96,24.84 1116.12,24.21 1115.17,24.76 1114.80,26.66 1111.20,26.66 1110.83,24.76 1109.88,24.21 1108.04,24.84 1106.24,21.72 1107.71,20.45 1107.71,19.35 1106.24,18.08 1108.04,14.96 1109.88,15.59 1110.83,15.04" fill="none" stroke="#474747" stroke-width="1.5" stroke-linejoin="round"/><circle cx="1113" cy="19.9" r="2.2" fill="#474747"/>
<polygon points="1164.20,40.24 1167.80,40.24 1168.17,42.14 1169.12,42.69 1170.96,42.06 1172.76,45.18 1171.29,46.45 1171.29,47.55 1172.76,48.82 1170.96,51.94 1169.12,51.31 1168.17,51.86 1167.80,53.76 1164.20,53.76 1163.83,51.86 1162.88,51.31 1161.04,51.94 1159.24,48.82 1160.71,47.55 1160.71,46.45 1159.24,45.18 1161.04,42.06 1162.88,42.69 1163.83,42.14" fill="none" stroke="#474747" stroke-width="1.5" stroke-linejoin="round"/><circle cx="1166" cy="47" r="2.2" fill="#474747"/>
<circle cx="1141" cy="15.6" r="1.5" fill="#474747"/>
<circle cx="1141" cy="20" r="1.5" fill="#474747"/>
<circle cx="1141" cy="24.6" r="1.5" fill="#474747"/>
<path d="M1161.5 15.5 L1170.5 24.5 M1170.5 15.5 L1161.5 24.5" stroke="#474747" stroke-width="1.5"/>
<rect x="21.7" y="40.7" width="12.6" height="12.6" rx="1" stroke="#474747" stroke-width="1.5" fill="none"/>
<rect x="25" y="41" width="1.5" height="12" fill="#474747"/>
<path d="M28.5 44 L31.5 47 L28.5 50 Z" fill="#474747"/>
<circle cx="56" cy="47" r="6.3" stroke="#474747" stroke-width="1.5" fill="none"/>
<circle cx="56" cy="47" r="4" fill="#474747"/>
<path d="M89.6 44 A6 6 0 1 0 90 48.5" stroke="#474747" stroke-width="1.5" fill="none"/>
<path d="M90.5 40 V45.3 H85.2 Z" fill="#474747"/>
<circle cx="112" cy="47" r="6.3" stroke="#474747" stroke-width="1.5" fill="none"/>
<path d="M107.5 51.5 L116.5 42.5" stroke="#474747" stroke-width="1.5"/>
<rect x="130" y="39" width="1" height="16" fill="#dde1e8"/>
<path d="M148.8 49.8 V41.2 M145.3 44.8 L148.8 41.2 L152.3 44.8 M143.8 50 V51.2 Q143.8 52.3 144.9 52.3 H152.9 Q154 52.3 154 51.2 V50" stroke="#474747" stroke-width="1.6" fill="none"/>
<path d="M177.1 40.2 V48.8 M173.6 45.3 L177.1 48.8 L180.6 45.3 M171.8 50 V51.2 Q171.8 52.3 172.9 52.3 H181 Q182.1 52.3 182.1 51.2 V50" stroke="#474747" stroke-width="1.6" fill="none"/>
<rect x="195.5" y="39" width="1" height="16" fill="#dde1e8"/>
<path d="M351.5 44.5 H358.5 L355 49 Z" fill="#474747"/>
<rect x="364.5" y="39" width="1" height="16" fill="#dde1e8"/>
<rect x="375" y="41" width="12" height="12" rx="2" fill="#1f64d8"/>
<path d="M377.6 47.2 L380 49.6 L384.6 44.2" stroke="#fff" stroke-width="1.6" fill="none"/>
<rect x="473.5" y="41" width="12" height="12" rx="2" fill="#1f64d8"/>
<path d="M476.1 47.2 L478.5 49.6 L483.1 44.2" stroke="#fff" stroke-width="1.6" fill="none"/>
<path d="M556.5 41 H559.5 V46 H563 V49 H553 V46 H556.5 Z" stroke="#474747" stroke-width="1.3" fill="none" stroke-linejoin="round"/>
<path d="M553 49 L552 53.5 H564 L563 49 M555.5 53.5 V51 M558 53.5 V51 M560.5 53.5 V51" stroke="#474747" stroke-width="1.3" fill="none"/>
<rect x="1148" y="39" width="1" height="17" fill="#dde1e8"/>
</svg>
<div class="t" style="left:205px;top:42px;font-size:12.5px;color:#333;transform:scaleX(1.025);transform-origin:0 50%">study.jixu.space #1</div>
<div class="t" style="left:392px;top:42px;font-size:12.4px;color:#333;transform:scaleX(1.025);transform-origin:0 50%">Screenshots</div>
<div class="t" style="left:491px;top:42px;font-size:12.4px;color:#333;transform:scaleX(1.1);transform-origin:0 50%">Memory</div>
<div class="t" style="left:1076px;top:16px;font-size:12px;color:#474747">1</div>
<div class="t" style="left:1160px;top:79px;font-size:11px;font-weight:bold;color:#8796ab">CPU</div>
<div class="t" style="left:1160.5px;top:101px;font-size:11px;font-weight:bold;color:#8796ab">NET</div>
<div class="t" style="left:1153px;top:142.5px;font-size:11px;font-weight:bold;color:#8796ab">HEAP</div>
<div class="t" style="left:1100px;top:154.5px;font-size:10px;color:#8a97aa;transform:scaleX(0.93);transform-origin:0 50%">42.6 MB – 43.0 MB</div>
<svg width="1180" height="556" viewBox="0 0 1180 556"><path d="M18 187 H25.5 L21.75 193 Z" fill="#6b6b6b"/></svg>
<div class="t" style="left:28.5px;top:184px;font-size:12px;color:#333;transform:scaleX(1.064);transform-origin:0 50%">Network</div>
<div class="sw" style="left:93px;background:#4c8bf5"></div>
<div class="lg" style="left:105.5px">Doc</div>
<div class="sw" style="left:132px;background:#c371f4"></div>
<div class="lg" style="left:144px">CSS</div>
<div class="sw" style="left:170.7px;background:#f6c343"></div>
<div class="lg" style="left:182.7px">JS</div>
<div class="sw" style="left:202.8px;background:#1a9bc4"></div>
<div class="lg" style="left:214.2px">Font</div>
<div class="sw" style="left:244px;background:#72d29b"></div>
<div class="lg" style="left:256.2px">Img</div>
<div class="sw" style="left:283.3px;background:#1e9b57"></div>
<div class="lg" style="left:295.3px">Media</div>
<div class="sw" style="left:331px;background:#8f7ef7"></div>
<div class="lg" style="left:343px">Wasm</div>
<div class="sw" style="left:379px;background:#c9c9c9"></div>
<div class="lg" style="left:390.5px">Other</div>
</body></html>
